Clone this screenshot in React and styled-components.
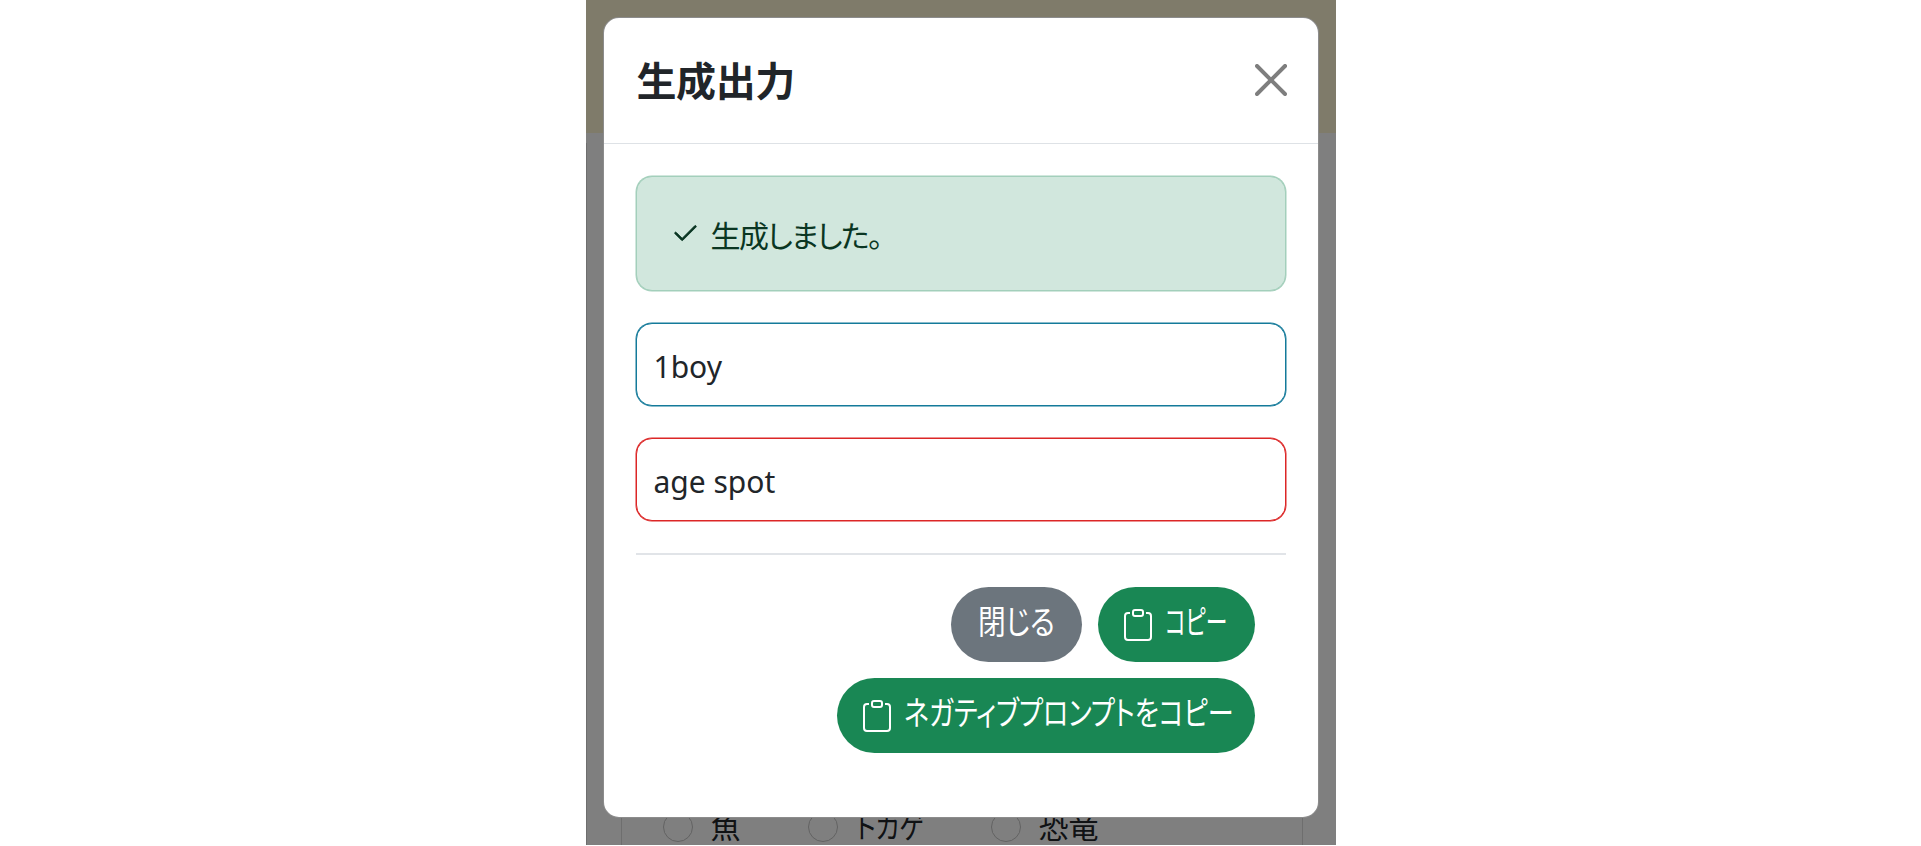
import React from "react";
import styled, { createGlobalStyle } from "styled-components";

const Global = createGlobalStyle`
  html, body { margin: 0; padding: 0; background: #fff; }
  body {
    font-family: "Noto Sans", "Noto Sans CJK JP", sans-serif;
    font-size: 30px;
    color: #212529;
    font-feature-settings: "palt";
  }
  * { box-sizing: border-box; }
`;

const Page = styled.div`
  display: flex;
  justify-content: center;
  width: 100%;
  height: 846px;
  overflow: hidden;
`;

const Frame = styled.div`
  position: relative;
  display: flex;
  flex-direction: column;
  width: 750px;
  height: 845px;
  overflow: hidden;
  background: #fff;
`;

const Navbar = styled.div`
  height: 133px;
  flex: none;
  background: #fef6d4;
`;

const Main = styled.main`
  flex: 1;
  display: flex;
  flex-direction: column;
  justify-content: flex-end;
  padding: 0 33px 0 34px;
  border-left: 1px solid #ddd;
  margin-top: 10px;
`;

const Card = styled.section`
  height: 100px;
  border: 1px solid #dcdcdc;
  border-bottom: 0;
  border-top: 0;
  padding: 0 0 3px 41px;
  display: flex;
  align-items: flex-end;
  gap: 67px;
`;

const RadioItem = styled.label`
  display: flex;
  align-items: center;
  gap: 18px;
  line-height: 30px;
  color: #212529;
`;

const RadioMark = styled.span`
  width: 30px;
  height: 30px;
  border-radius: 50%;
  border: 1px solid #c4c4c4;
  background: #fff;
  flex: none;
`;

const Backdrop = styled.div`
  position: absolute;
  inset: 0;
  background: rgba(0, 0, 0, 0.5);
`;

const Modal = styled.div`
  position: absolute;
  top: 17px;
  left: 17px;
  width: 716px;
  background: #fff;
  border: 1px solid rgba(0, 0, 0, 0.45);
  border-radius: 16px;
  overflow: hidden;
`;

const Header = styled.header`
  display: flex;
  align-items: center;
  justify-content: space-between;
  height: 126px;
  padding: 0 31px 0 33px;
  border-bottom: 1px solid #dee2e6;
`;

const Title = styled.h1`
  margin: 0;
  font-size: 40px;
  line-height: 48px;
  font-weight: 700;
  color: #212529;
  letter-spacing: -0.4px;
`;

const CloseButton = styled.button`
  width: 32px;
  height: 32px;
  padding: 0;
  border: 0;
  background: none;
  color: #000;
  opacity: 0.5;
  display: flex;
  margin-top: -1px;
  svg { width: 32px; height: 32px; display: block; }
`;

const Body = styled.div`
  display: flex;
  flex-direction: column;
  gap: 32px;
  padding: 32px 32px 64px 32px;
`;

const Alert = styled.div`
  height: 115px;
  display: flex;
  align-items: center;
  gap: 11px;
  padding: 0 33px;
  background: #d1e7dd;
  border: 1px solid #a3cfbb;
  box-shadow: 0 0 0 0.5px #a3cfbb;
  border-radius: 16px;
  color: #0a3622;
  font-size: 30px;
  letter-spacing: -1.6px;
  svg { width: 30px; height: 30px; flex: none; stroke: currentColor; stroke-width: 0.45; }
`;

const Field = styled.input`
  display: block;
  width: 100%;
  height: 83px;
  padding: 3px 17px 0;
  font: inherit;
  font-size: 30px;
  color: #212529;
  background: #fff;
  border: 1px solid ${(p) => p.$tone};
  box-shadow: 0 0 0 0.5px ${(p) => p.$tone};
  border-radius: 16px;
  outline: 0;
`;

const Rule = styled.hr`
  margin: 0;
  border: 0;
  border-top: 2px solid #e1e4e8;
`;

const Actions = styled.div`
  display: flex;
  flex-wrap: wrap;
  justify-content: flex-end;
  gap: 16px;
  padding-right: 31px;
`;

const ActionButton = styled.button`
  display: inline-flex;
  align-items: center;
  justify-content: center;
  gap: 11px;
  height: 75px;
  padding: 0 27px 0 ${(p) => (p.$withIcon ? "24px" : "27px")};
  border: 0;
  border-radius: 38px;
  background: ${(p) => p.$bg};
  color: #fff;
  font: inherit;
  font-size: 33px;
  line-height: 40px;
  white-space: nowrap;
  svg { width: 32px; height: 32px; flex: none; }
`;

/* Condensed kana run: layout width is fixed, glyphs are squeezed to fit it. */
const Label = styled.span`
  display: inline-block;
  width: ${(p) => p.$width}px;
  transform: scaleX(${(p) => p.$squeeze});
  transform-origin: left center;
  text-align: left;
  white-space: nowrap;
  margin-top: ${(p) => p.$lift || 0}px;
`;

const ClipboardIcon = () => (
  <svg viewBox="0 0 16 16" fill="currentColor" aria-hidden="true">
    <path d="M4 1.5H3a2 2 0 0 0-2 2V14a2 2 0 0 0 2 2h10a2 2 0 0 0 2-2V3.5a2 2 0 0 0-2-2h-1v1h1a1 1 0 0 1 1 1V14a1 1 0 0 1-1 1H3a1 1 0 0 1-1-1V3.5a1 1 0 0 1 1-1h1z" />
    <path d="M9.5 1a.5.5 0 0 1 .5.5v1a.5.5 0 0 1-.5.5h-3a.5.5 0 0 1-.5-.5v-1a.5.5 0 0 1 .5-.5zm-3-1A1.5 1.5 0 0 0 5 1.5v1A1.5 1.5 0 0 0 6.5 4h3A1.5 1.5 0 0 0 11 2.5v-1A1.5 1.5 0 0 0 9.5 0z" />
  </svg>
);

const CheckIcon = () => (
  <svg viewBox="0 0 16 16" fill="currentColor" aria-hidden="true">
    <path d="M13.854 3.646a.5.5 0 0 1 0 .708l-7 7a.5.5 0 0 1-.708 0l-3.5-3.5a.5.5 0 1 1 .708-.708L6.5 10.293l6.646-6.647a.5.5 0 0 1 .708 0" />
  </svg>
);

const CloseIcon = () => (
  <svg viewBox="0 0 16 16" fill="currentColor" aria-hidden="true">
    <path d="M.293.293a1 1 0 0 1 1.414 0L8 6.586 14.293.293a1 1 0 1 1 1.414 1.414L9.414 8l6.293 6.293a1 1 0 0 1-1.414 1.414L8 9.414l-6.293 6.293a1 1 0 0 1-1.414-1.414L6.586 8 .293 1.707a1 1 0 0 1 0-1.414" />
  </svg>
);

export default function App() {
  return (
    <>
      <Global />
      <Page>
        <Frame>
          <Navbar />
          <Main>
            <Card>
              <RadioItem><RadioMark />魚</RadioItem>
              <RadioItem><RadioMark /><Label $width={68} $squeeze={0.85}>トカゲ</Label></RadioItem>
              <RadioItem><RadioMark />恐竜</RadioItem>
            </Card>
          </Main>
          <Backdrop />
          <Modal>
            <Header>
              <Title>生成出力</Title>
              <CloseButton aria-label="閉じる"><CloseIcon /></CloseButton>
            </Header>
            <Body>
              <Alert><CheckIcon /><span>生成しました。</span></Alert>
              <Field $tone="#147a9a" defaultValue="1boy" readOnly />
              <Field $tone="#dc2626" defaultValue="age spot" readOnly />
              <Rule />
              <Actions>
                <ActionButton $bg="#6c757d"><Label $width={77} $squeeze={0.84} $lift={-5}>閉じる</Label></ActionButton>
                <ActionButton $bg="#198754" $withIcon><ClipboardIcon /><Label $width={63} $squeeze={0.66} $lift={-5}>コピー</Label></ActionButton>
                <ActionButton $bg="#198754" $withIcon><ClipboardIcon /><Label $width={324} $squeeze={0.79} $lift={-5}>ネガティブプロンプトをコピー</Label></ActionButton>
              </Actions>
            </Body>
          </Modal>
        </Frame>
      </Page>
    </>
  );
}
